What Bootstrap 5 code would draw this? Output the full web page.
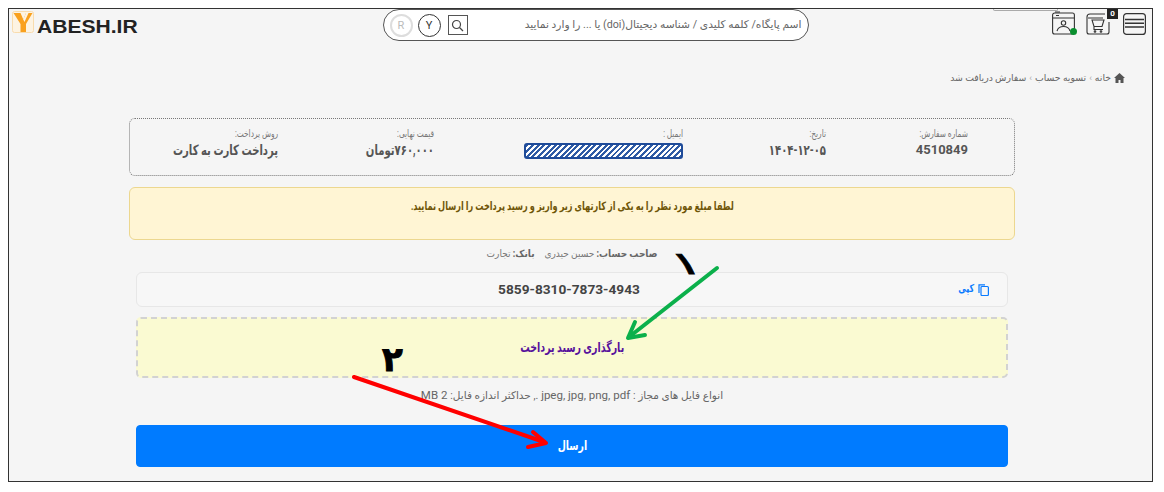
<!DOCTYPE html>
<html lang="fa" dir="rtl">
<head>
<meta charset="utf-8">
<title>سفارش دریافت شد</title>
<link href="https://cdn.jsdelivr.net/npm/bootstrap@5.3.0/dist/css/bootstrap.min.css" rel="stylesheet">
<style>
html,body{height:492px;overflow:hidden;background:#fff}
body{font-family:Roboto,"DejaVu Sans",sans-serif;color:#666;font-size:11px}
.shot{margin:8px 11px 0 8px;height:474px;border:1px solid #333;background:#f5f5f5;overflow:hidden}
.topbar{height:33px;padding:0 6px 0 3px}
.iconset{width:94px;gap:11px;padding-top:2px;height:26px}
.pic{position:relative;display:block;flex:none}
.pic-menu{margin-left:2px}
.cart-count{position:absolute;top:-5px;left:21px;width:11px;height:11px;background:#222;color:#fff;font-size:8px;line-height:11px;text-align:center;font-weight:700}
.online{position:absolute;bottom:0;right:-2px;width:7px;height:7px;background:#0a8f2e;border-radius:50%}
.tab-stub{position:absolute;top:0;right:94px;width:65px;height:2px;border:1px solid #aaa;border-top:0;border-radius:0 0 4px 4px}
.finder{width:426px;height:32px;background:#fff;border:1px solid #555;border-radius:16px;padding:0 6px}
.finder-text{font-size:10.7px;color:#666;white-space:nowrap}
.round{width:23px;height:23px;border:1px solid #333;border-radius:50%;font-size:11px;line-height:21px;text-align:center;color:#333;flex:none}
.round.pale{border:2px solid #ddd;color:#bbb;line-height:19px}
.seek{width:20px;height:20px;border:1px solid #555;flex:none;display:flex;align-items:center;justify-content:center;margin-left:2px}
.finder-tools{gap:5px}
.brand{direction:ltr;width:127px;flex:none;gap:3px}
.brand svg{margin-top:2px;flex:none}
.brand-text{font-family:"Liberation Sans",sans-serif;font-weight:700;font-size:18px;color:#222;line-height:1;margin-top:9px;transform:scaleX(1.17);transform-origin:left center;white-space:nowrap}
.trail{margin:29px 27px 0 0;height:14px;font-size:9.3px;color:#666;gap:3px;line-height:14px}
.trail i{font-style:normal;color:#aaa;font-size:9px}
.holder{margin:0 137px 0 120px}
.order-box{margin-top:33px;height:58px;border:1px dotted #777;border-radius:6px;padding:8px 0 0}
.order-col{flex:none}
.order-label{font-size:10px;line-height:13px;color:#777;transform:scaleX(.74);transform-origin:right center;white-space:nowrap}
.order-value{font-size:13px;font-weight:700;line-height:20px;color:#555;white-space:nowrap}
.order-value.slim{font-size:14px;transform:scaleX(.72);transform-origin:right center}
.hatch{width:159px;height:16px;margin-top:3px;border:2px solid #1f4b99;border-radius:3px;background:repeating-linear-gradient(135deg,#2f5ba5 0 2px,#fff 2px 4px)}
.notice{margin:11px 0 0;height:53px;padding:9px 0 0;background:#fff5d4;border:1px solid #ecd78f;border-radius:6px;color:#6f5508;font-size:11.5px;font-weight:700;line-height:18px;text-align:center}
.squeeze{display:inline-block;white-space:nowrap;transform-origin:center}
.notice .squeeze{transform:scaleX(.71)}
.owner{height:32px;padding-top:6px;font-size:10px;line-height:16px;gap:11px;color:#777;transform:scaleX(.9)}
.owner b{color:#666}
.inner{margin:0 7px 0 7px}
.number-box{height:35px;background:#f7f7f7;border:1px solid #e7e7e7;border-radius:6px;padding:0 18px 0 0}
.number{font-size:13.700px;font-weight:700;color:#444;direction:ltr}
.copy-link{color:#0a7bff;font-size:11px;font-weight:700;gap:4px;white-space:nowrap;text-decoration:none;width:30px}
.copy-link svg{flex:none}
.copy-word{display:inline-block;transform:scaleX(.72);transform-origin:right center}
.spacer{width:42px}
.dropzone{margin-top:10px;height:61px;background:#fafad2;border:2px dashed #d2d2d2;border-radius:5px;color:#57129c;font-size:13.500px;font-weight:700}
.dropzone .squeeze{transform:scaleX(.7)}
.types{margin-top:9px;height:16px;font-size:11.500px;line-height:16px;color:#666;text-align:center}
.types span{font-size:10.500px}
.send{margin-top:22px;height:42px;font-size:13px;font-weight:700;background:#007bff;border-color:#007bff;border-radius:4px}
.send .squeeze{transform:scaleX(.72)}
.marks{position:absolute;left:0;top:0;pointer-events:none}
.num-mark{position:absolute;font-family:"DejaVu Sans",sans-serif;font-weight:700;color:#000;line-height:1;-webkit-text-stroke:1px #000}
.mark-one{left:667px;top:239px;font-size:31px;transform:skewX(25deg)}
.mark-two{left:373px;top:333px;font-size:34px}
</style>
</head>
<body>
<div class="shot position-relative">
  <div class="topbar d-flex justify-content-between align-items-start position-relative">
    <span class="tab-stub"></span>
    <div class="iconset d-flex align-items-end">
      <svg class="pic pic-menu" width="23" height="22" viewBox="0 0 23 22" fill="none" stroke="#333" stroke-width="1.2"><rect x=".6" y=".6" width="21.8" height="20.8" rx="3"/><path d="M2 6.500h19M2 10.200h19M2 14h19" stroke-width="1.400"/></svg>
      <span class="pic">
        <svg width="24" height="22" viewBox="0 0 24 22" fill="none" stroke="#333" stroke-width="1.1" class="d-block"><path d="M19 1H4a3 3 0 0 0-3 3v15a2 2 0 0 0 2 2h18a2 2 0 0 0 2-2V9"/><path d="M2 5h15M6 7h12l-2 6.500H8zM8 13.500v3h9"/><circle cx="9" cy="18.500" r=".8"/><circle cx="15" cy="18.500" r=".8"/></svg>
        <span class="cart-count">0</span>
      </span>
      <span class="pic">
        <svg width="23" height="24" viewBox="0 0 23 24" fill="none" stroke="#333" stroke-width="1.100" class="d-block"><path d="M.6 4a2 2 0 0 1 2-2h17.800a2 2 0 0 1 2 2v17a2 2 0 0 1-2 2H2.600a2 2 0 0 1-2-2zM.6 7h21.800"/><path d="M3 1h5M4 4.500h3" stroke-width="1"/><circle cx="11.500" cy="12" r="2.200"/><path d="M5 20c1-3.500 3.500-4.500 6.500-4.500s5.500 1 6.500 4.500"/></svg>
        <span class="online"></span>
      </span>
    </div>
    <div class="finder d-flex align-items-center justify-content-between">
      <span class="finder-text">اسم پایگاه/ کلمه کلیدی / شناسه دیجیتال(doi) یا ... را وارد نمایید</span>
      <span class="finder-tools d-flex align-items-center flex-row-reverse">
        <span class="round pale">R</span>
        <span class="round">Y</span>
        <span class="seek"><svg width="13" height="13" viewBox="0 0 13 13" fill="none" stroke="#444" stroke-width="1.200"><circle cx="5.500" cy="5.500" r="4"/><path d="M8.500 8.500l3.500 3.500"/></svg></span>
      </span>
    </div>
    <div class="brand d-flex align-items-start">
      <svg width="22" height="22" viewBox="0 0 22 22"><rect x=".5" y=".5" width="21" height="21" rx="2" fill="#fdf3e2" stroke="#f8dcae"/><path d="M1.500 2h7l2.800 6.500L14 2h6.500L14 13v8H8.500v-8z" fill="#f9a11f"/><path d="M11.300 8.500L14 2h2.500l-4 9z" fill="#fdf3e2"/></svg>
      <span class="brand-text">ABESH.IR</span>
    </div>
  </div>

  <div class="trail d-flex align-items-center">
    <svg width="11" height="10" viewBox="0 0 11 10" fill="#555"><path d="M5.500 0L0 5h1.500v5h3V7h2v3h3V5H11z"/></svg>
    <span>خانه</span><i>›</i><span>تسویه حساب</span><i>›</i><span>سفارش دریافت شد</span>
  </div>

  <div class="holder">
    <div class="order-box d-flex">
      <div class="order-col" style="width:46px"></div>
      <div class="order-col" style="width:142px"><div class="order-label">شماره سفارش:</div><div class="order-value">4510849</div></div>
      <div class="order-col" style="width:143px"><div class="order-label">تاریخ:</div><div class="order-value slim">۱۴۰۴-۱۲-۰۵</div></div>
      <div class="order-col" style="width:249px"><div class="order-label">ایمیل :</div><div class="hatch"></div></div>
      <div class="order-col" style="width:156px"><div class="order-label">قیمت نهایی:</div><div class="order-value slim">۷۶۰,۰۰۰تومان</div></div>
      <div class="order-col"><div class="order-label">روش پرداخت:</div><div class="order-value slim">پرداخت کارت به کارت</div></div>
    </div>

    <div class="alert notice"><span class="squeeze">لطفا مبلغ مورد نظر را به یکی از کارتهای زیر واریز و رسید پرداخت را ارسال نمایید.</span></div>

    <div class="owner d-flex justify-content-center">
      <span><b>صاحب حساب:</b> حسین حیدری</span>
      <span><b>بانک:</b> تجارت</span>
    </div>

    <div class="inner">
      <div class="number-box d-flex align-items-center justify-content-between">
        <a class="copy-link d-flex align-items-center" href="#">
          <svg width="11" height="12" viewBox="0 0 11 12" fill="none" stroke="#0a7bff" stroke-width="1.200"><rect x="3" y="2.500" width="7.400" height="9" rx="1"/><path d="M1 9V.8h6"/></svg>
          <span class="copy-word">کپی</span></a>
        <span class="number">5859-8310-7873-4943</span>
        <span class="spacer"></span>
      </div>
      <div class="dropzone d-flex align-items-center justify-content-center"><span class="squeeze">بارگذاری رسید پرداخت</span></div>
      <div class="types"><span>انواع فایل های مجاز :</span> jpeg, jpg, png, pdf <span>., حداکثر اندازه فایل:</span> 2 MB</div>
      <button class="btn btn-primary send w-100 d-block" type="button"><span class="squeeze">ارسال</span></button>
    </div>
  </div>

  <svg class="marks" width="1143" height="472" viewBox="9 9 1143 472" fill="none">
    <g stroke="#0bb04b" stroke-width="4" stroke-linecap="round"><path d="M717 268L629 337"/><path d="M628 338l7-16M628 338l17-3"/></g>
    <g stroke="#f00" stroke-width="4" stroke-linecap="round"><path d="M354 377L544 442"/><path d="M546 443l-13-11M546 443l-18 4"/></g>
  </svg>
  <span class="num-mark mark-one">۱</span>
  <span class="num-mark mark-two">۲</span>
</div>
<script src="https://cdn.jsdelivr.net/npm/bootstrap@5.3.0/dist/js/bootstrap.bundle.min.js"></script>
</body>
</html>
